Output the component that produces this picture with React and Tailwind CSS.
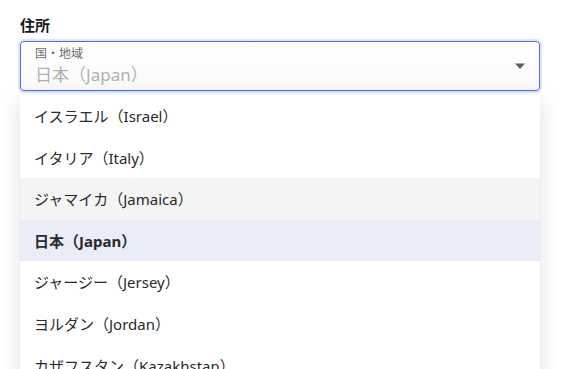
import React from 'react';

const countries = [
  { name: 'イスラエル（Israel）' },
  { name: 'イタリア（Italy）' },
  { name: 'ジャマイカ（Jamaica）', hover: true },
  { name: '日本（Japan）', selected: true },
  { name: 'ジャージー（Jersey）' },
  { name: 'ヨルダン（Jordan）' },
  { name: 'カザフスタン（Kazakhstan）' },
];

export default function App() {
  return (
    <div
      className="h-[369px] w-[565px] overflow-hidden bg-white pl-5 pr-[25px] pt-[15px]"
      style={{ fontFamily: '"Noto Sans", "Noto Sans CJK JP", sans-serif' }}
    >
      {/* Label */}
      <div className="text-[15px] font-semibold leading-[20px] text-[#1a1a1a]">住所</div>

      {/* Select */}
      <div className="relative mt-[6px]">
        <div className="flex h-[50px] items-center justify-between rounded-[4px] border border-[#4a6fdc] bg-gradient-to-b from-white to-[#fafafa] pl-[14px] pr-[12px] shadow-[0_0_0_2px_#dde5fb]">
          <div className="flex flex-col">
            <span className="text-[12px] leading-[14px] text-[#6b6b6b]">国・地域</span>
            <span className="mt-[4px] text-[17px] leading-[20px] text-[#b0b0b0]">日本（Japan）</span>
          </div>
          <svg width="12" height="8" viewBox="0 0 12 8" className="mr-[1px]">
            <path d="M1 1.5 L11 1.5 L6 7 Z" fill="#5c5c5c" />
          </svg>
        </div>

        {/* Dropdown list */}
        <ul className="absolute left-0 right-0 top-[54px] bg-white shadow-[0_4px_20px_rgba(0,0,0,0.12)]">
          {countries.map((c) => (
            <li
              key={c.name}
              className={`flex h-[41.6px] items-center px-[14px] pt-[1px] text-[15px] text-[#2a2a2a] ${
                c.selected ? 'bg-[#e8edf8] font-bold' : c.hover ? 'bg-[#f4f4f4]' : ''
              }`}
            >
              {c.name}
            </li>
          ))}
        </ul>
      </div>
    </div>
  );
}
